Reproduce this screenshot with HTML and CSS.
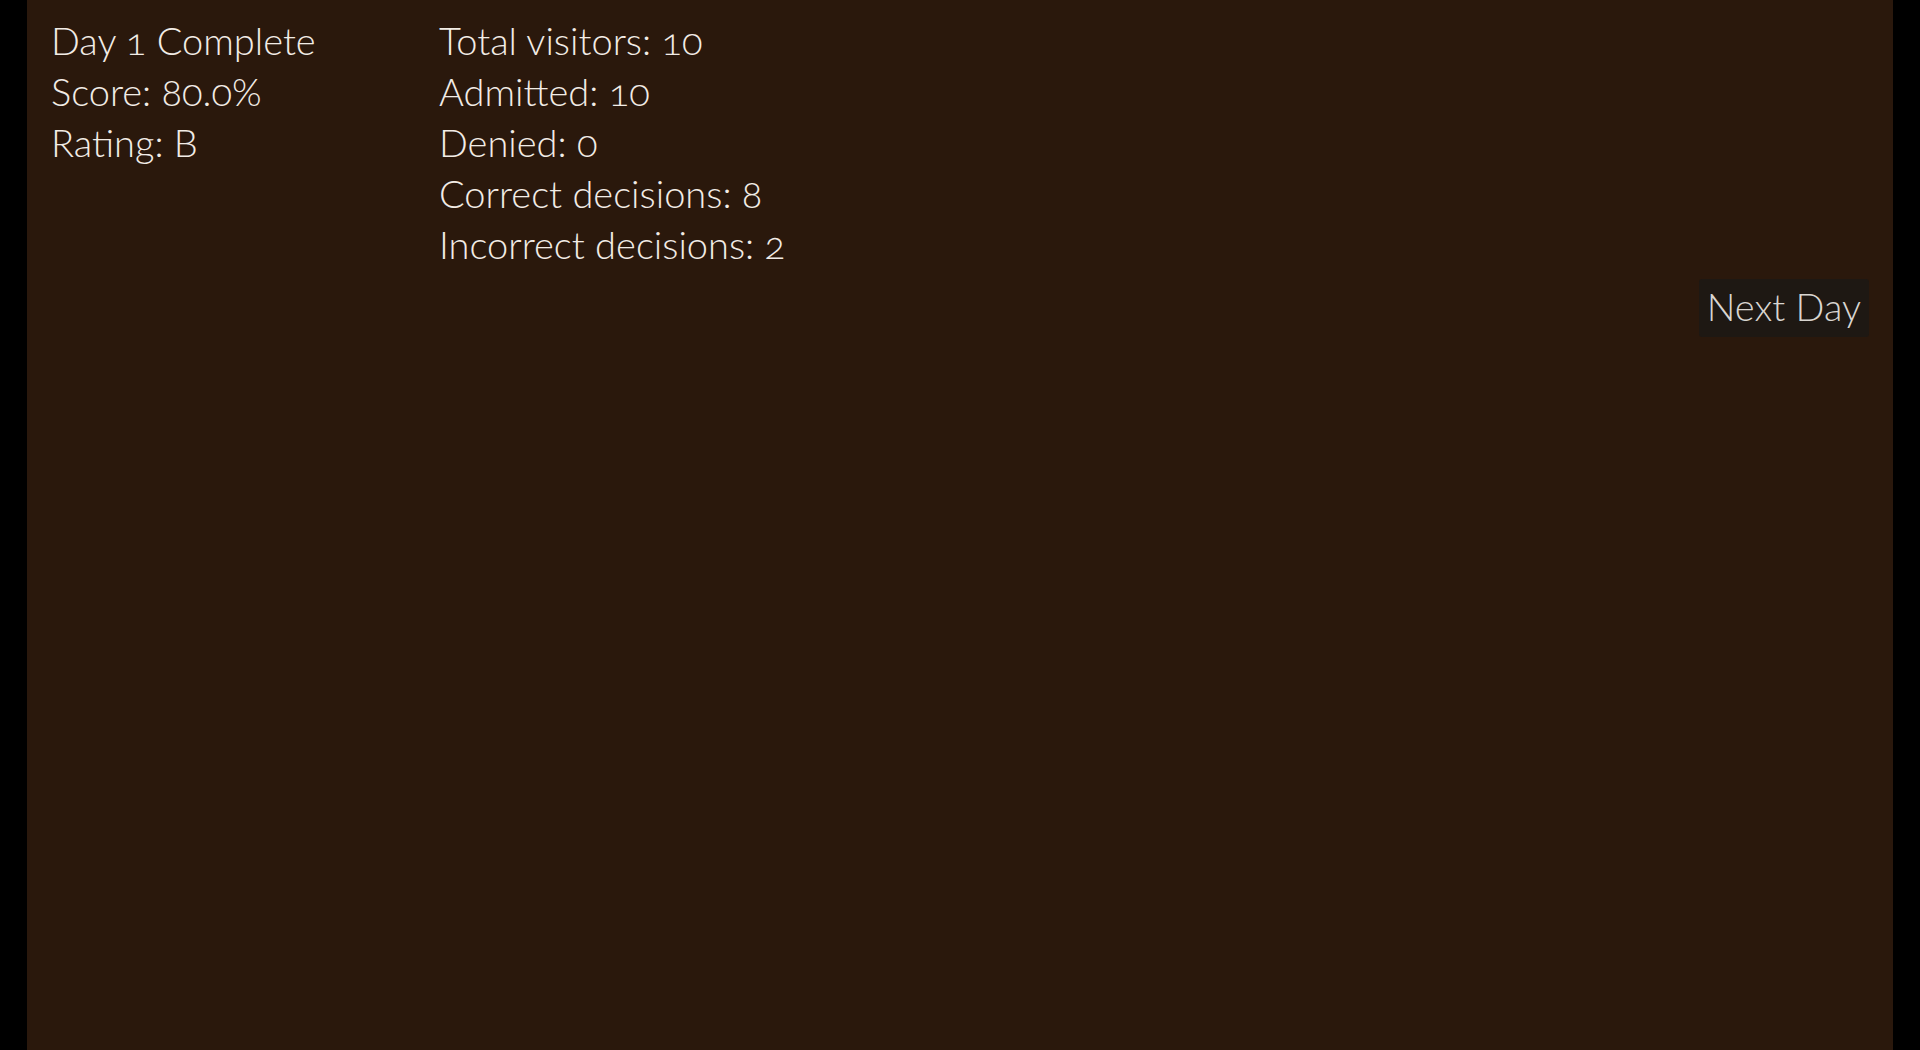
FILE: index.html
```html
<!DOCTYPE html>
<html>
<head>
<meta charset="utf-8">
<link rel="stylesheet" href="styles.css">
</head>
<body>
<div class="screen">
  <div class="summary">
    <div class="col col-main">
      <div class="line">Day 1 Complete</div>
      <div class="line">Score: 80.0%</div>
      <div class="line">Rating: B</div>
    </div>
    <div class="col col-stats">
      <div class="line">Total visitors: 10</div>
      <div class="line">Admitted: 10</div>
      <div class="line">Denied: 0</div>
      <div class="line">Correct decisions: 8</div>
      <div class="line">Incorrect decisions: 2</div>
    </div>
  </div>
  <div class="actions">
    <button class="next-btn">Next Day</button>
  </div>
</div>
</body>
</html>
```

FILE: styles.css
```css
html, body {
  margin: 0;
  padding: 0;
  height: 100%;
  background: #000;
}
.screen {
  margin: 0 27px;
  height: 100%;
  background: #2a180c;
  color: #f2ece6;
  font-family: Lato, "Open Sans", sans-serif;
  font-weight: 300;
  font-variant-numeric: oldstyle-nums;
  box-sizing: border-box;
  padding: 15px 24px 0 24px;
}
.summary {
  display: flex;
}
.col-main {
  width: 388px;
}
.line {
  font-size: 38px;
  line-height: 51px;
  white-space: nowrap;
}
.actions {
  display: flex;
  justify-content: flex-end;
  margin-top: 9px;
}
.next-btn {
  background: #1e1813;
  color: #d9d5d0;
  border: none;
  border-radius: 3px;
  font-family: Lato, "Open Sans", sans-serif;
  font-weight: 300;
  font-size: 38px;
  height: 58px;
  padding: 0 8px 4px 8px;
  line-height: 54px;
}
```
